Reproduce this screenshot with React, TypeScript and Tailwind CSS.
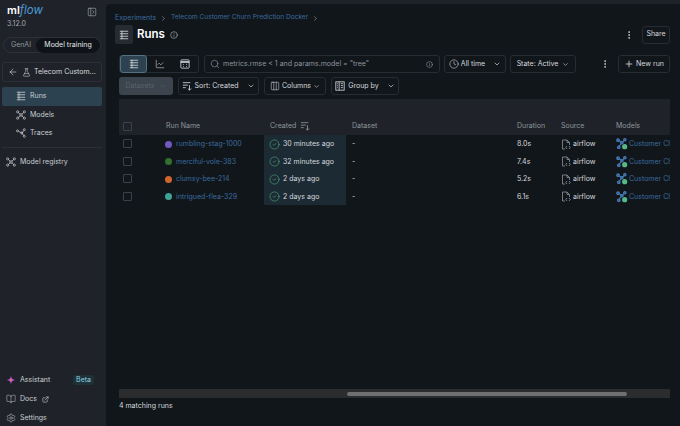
import {
  ArrowLeft,
  ChartLine,
  ChevronDown,
  ChevronRight,
  CircleCheck,
  Clock,
  Columns3,
  ExternalLink,
  FlaskConical,
  Info,
  MoreVertical,
  PanelLeftOpen,
  Plus,
  Search,
  Settings,
  BookOpen,
} from "lucide-react";

const runs = [
  { name: "rumbling-stag-1000", color: "bg-[#6f5bc0]", created: "30 minutes ago", duration: "8.0s" },
  { name: "merciful-vole-383", color: "bg-[#32702f]", created: "32 minutes ago", duration: "7.4s" },
  { name: "clumsy-bee-214", color: "bg-[#d0662e]", created: "2 days ago", duration: "5.2s" },
  { name: "intrigued-flea-329", color: "bg-[#3fa394]", created: "2 days ago", duration: "6.1s" },
];

const RunsIcon = ({ size = 10 }: { size?: number }) => (
  <svg width={size} height={size} viewBox="0 0 12 12" fill="none" stroke="currentColor" strokeWidth="1" className="shrink-0">
    <path d="M1 1.5h10M1 4.5h10M1 7.5h10M1 10.5h10M3.5 1v10" />
  </svg>
);

const ModelsIcon = () => (
  <svg width="10" height="10" viewBox="0 0 12 12" fill="none" stroke="currentColor" strokeWidth="0.9" className="shrink-0">
    <path d="M2.8 3 5 5M9.2 3 7 5M2.8 9 5 7M9.2 9 7 7" />
    <circle cx="2" cy="2.2" r="1.3" />
    <circle cx="10" cy="2.2" r="1.3" />
    <circle cx="2" cy="9.8" r="1.3" />
    <circle cx="10" cy="9.8" r="1.3" />
    <circle cx="6" cy="6" r="1.5" />
  </svg>
);

const TracesIcon = () => (
  <svg width="10" height="10" viewBox="0 0 12 12" fill="none" stroke="currentColor" strokeWidth="0.9" className="shrink-0">
    <path d="M3 4 7 6 9.5 2.8M7 6l2.5 3.2" />
    <circle cx="1.8" cy="3.4" r="1.2" />
    <circle cx="10" cy="2" r="1.2" />
    <circle cx="10" cy="10" r="1.2" />
    <circle cx="7" cy="6" r="1.2" />
  </svg>
);

const SortIcon = ({ size = 10 }: { size?: number }) => (
  <svg width={size} height={size} viewBox="0 0 12 12" fill="none" stroke="currentColor" strokeWidth="1" className="shrink-0">
    <path d="M1 2h9M1 5h6M1 8h3.5M9 5v6M7 9l2 2 2-2" />
  </svg>
);

const GridIcon = () => (
  <svg width="10" height="10" viewBox="0 0 12 12" fill="none" stroke="currentColor" strokeWidth="1" className="shrink-0">
    <rect x="1" y="1" width="10" height="10" rx="1" />
    <path d="M1 3.6h10" strokeWidth="2" />
    <path d="M3.5 6.5h1M7.5 6.5h1M3.5 9h1M7.5 9h1" />
  </svg>
);

const GroupIcon = () => (
  <svg width="10" height="10" viewBox="0 0 12 12" fill="none" stroke="currentColor" strokeWidth="1" className="shrink-0">
    <rect x="1" y="1" width="10" height="10" />
    <path d="M5 1v10M7 3.2h2.5M7 5.5h2.5M7 8h2.5M2.5 3.2h1M2.5 5.5h1M2.5 8h1" />
  </svg>
);

const SourceIcon = () => (
  <svg width="10" height="11" viewBox="0 0 10 11" fill="none" stroke="#8e959b" strokeWidth="0.8" className="shrink-0">
    <path d="M4 10H1.5V1H6l2.5 2.5V6M6 1v2.5h2.5M6 7 4.8 8.5 6 10M8 7l1.2 1.5L8 10" />
  </svg>
);

// Graph glyph with the green registered badge, as used in the Models column
const ModelIcon = () => (
  <svg width="12" height="12" viewBox="0 0 13 13" fill="none" className="shrink-0">
    <g stroke="#4a7db8" strokeWidth="1.2">
      <path d="M2.5 2.5 6.5 5 3 9.5M6.5 5 9.5 2" />
      <circle cx="2.2" cy="2.4" r="1.4" fill="#2f5a8c" />
      <circle cx="9.6" cy="1.9" r="1.3" fill="#2f5a8c" />
      <circle cx="6.4" cy="5.2" r="1.3" fill="#2f5a8c" />
      <circle cx="3" cy="10" r="1.4" fill="#2f5a8c" />
    </g>
    <circle cx="9.4" cy="9.4" r="2.8" fill="#57b987" />
  </svg>
);

const AssistantIcon = () => (
  <svg width="10" height="10" viewBox="0 0 12 12" className="shrink-0">
    <path d="M6 .8C6.5 4 8 5.5 11.2 6 8 6.5 6.5 8 6 11.2 5.5 8 4 6.5.8 6 4 5.5 5.5 4 6 .8Z" fill="#a44fc4" />
    <circle cx="6" cy="6" r="1.6" fill="#e06a8c" />
  </svg>
);

const ToolButton = ({ children, className }: { children: React.ReactNode; className: string }) => (
  <div
    className={`flex h-[18px] items-center justify-center rounded-[3px] border border-[#262c33] text-[7px] text-[#d5d9dd] ${className}`}
  >
    {children}
  </div>
);

const NavRow = ({ icon, label, active }: { icon: React.ReactNode; label: string; active?: boolean }) => (
  <div
    className={`flex h-[18.5px] items-center gap-[4px] rounded-[2px] pl-[14px] text-[7px] text-[#c9ced3] ${
      active ? "bg-[#2c4250]" : ""
    }`}
  >
    {icon}
    {label}
  </div>
);

export default function App() {
  return (
    <div className="flex h-[426px] w-[680px] overflow-hidden bg-[#1f2329] font-['Inter',sans-serif] text-[#d5d9dd]">
      <aside className="flex w-[106px] shrink-0 flex-col pl-[2px] pr-[4px]">
        <div className="flex items-start justify-between pl-[5px] pr-[4px] pt-[2px]">
          <div>
            <div className="flex h-[16px] items-baseline text-[11px] font-semibold leading-[16px] text-white">
              ml<span className="text-[11.5px] font-normal italic text-[#4a9bd8]">flow</span>
            </div>
            <div className="mt-[1px] text-[7px] leading-[10px] text-[#a3a9af]">3.12.0</div>
          </div>
          <PanelLeftOpen size={10} className="mr-[1px] mt-[5px] text-[#a3a9af]" strokeWidth={1.5} />
        </div>

        <div className="ml-[1px] mt-[8px] flex h-[16px] w-[98px] items-center rounded-full border border-[#2c3238] text-[7px]">
          <span className="w-[32px] pl-[2px] text-center text-[#8e959b]">GenAI</span>
          <span className="flex h-[15px] flex-1 items-center justify-center rounded-full bg-[#0f1318] text-[#e4e7ea]">
            Model training
          </span>
        </div>

        <div className="mt-[9px] flex h-[20px] items-center gap-[4px] rounded-[2px] border border-[#2a3036] pl-[5px] text-[7px] text-[#d5d9dd]">
          <ArrowLeft size={10} strokeWidth={1.5} />
          <FlaskConical size={9} strokeWidth={1.4} />
          <span className="ml-[-1px] whitespace-nowrap">Telecom Custom...</span>
        </div>

        <div className="mt-[5px] flex flex-col">
          <NavRow active icon={<RunsIcon />} label="Runs" />
          <NavRow icon={<ModelsIcon />} label="Models" />
          <NavRow icon={<TracesIcon />} label="Traces" />
        </div>

        <div className="mt-[4px] border-t border-[#2a3036] pt-[9px]">
          <div className="flex items-center gap-[4px] pl-[4px] text-[7px] text-[#c9ced3]">
            <ModelsIcon />
            Model registry
          </div>
        </div>

        <div className="mt-auto flex flex-col gap-[9px] pb-[3px] pl-[4px] text-[7px] text-[#c9ced3]">
          <div className="flex h-[10px] items-center gap-[4px]">
            <AssistantIcon />
            <span>Assistant</span>
            <span className="ml-auto mr-[8px] rounded-[2px] bg-[#1d3238] px-[3px] text-[7px] text-[#8fd0e0]">Beta</span>
          </div>
          <div className="flex h-[10px] items-center gap-[4px]">
            <BookOpen size={10} strokeWidth={1.2} />
            Docs
            <ExternalLink size={7} className="ml-[1px]" />
          </div>
          <div className="flex h-[10px] items-center gap-[4px]">
            <Settings size={10} strokeWidth={1.2} />
            Settings
          </div>
        </div>
      </aside>

      <main className="mt-[4px] flex min-w-0 flex-1 flex-col rounded-tl-[4px] bg-[#11161b] pl-[13px] pr-[10px]">
        <div className="-ml-[4px] mt-[9px] flex h-[10px] items-center gap-[4px] text-[6.6px] text-[#3a6a9c]">
          <span className="text-[7px]">Experiments</span>
          <ChevronRight size={7} className="text-[#a3a9af]" />
          Telecom Customer Churn Prediction Docker
          <ChevronRight size={7} className="text-[#a3a9af]" />
        </div>

        <div className="mt-[2px] flex h-[19px] items-center">
          <div className="-ml-[4px] flex h-[19px] w-[18px] items-center justify-center rounded-[2px] bg-[#262b31]">
            <RunsIcon />
          </div>
          <h1 className="ml-[4px] text-[11.5px] font-semibold text-white">Runs</h1>
          <Info size={8} className="ml-[5px] text-[#a3a9af]" />
          <MoreVertical size={10} className="ml-auto mr-[8px] text-[#d5d9dd]" />
          <div className="flex h-[18px] w-[28px] items-center justify-center rounded-[3px] border border-[#262c33] text-[7px]">
            Share
          </div>
        </div>

        <div className="mt-[11px] flex items-center">
          <div className="flex h-[18px] w-[80px] shrink-0 items-center rounded-[3px] border border-[#262c33]">
            <div className="flex h-[18px] w-[27px] items-center justify-center rounded-[3px] border border-[#55707f] bg-[#2c4250]">
              <RunsIcon />
            </div>
            <div className="flex flex-1 justify-center">
              <ChartLine size={10} strokeWidth={1.4} />
            </div>
            <div className="flex flex-1 justify-center">
              <GridIcon />
            </div>
          </div>
          <div className="ml-[5px] flex h-[18px] w-[236px] shrink-0 items-center gap-[3px] rounded-[3px] border border-[#262c33] pl-[5px] pr-[6px] text-[7px] text-[#8e959b]">
            <Search size={10} strokeWidth={1.5} />
            <span className="whitespace-nowrap">metrics.rmse &lt; 1 and params.model = "tree"</span>
            <Info size={7} className="ml-auto" />
          </div>
          <ToolButton className="ml-[4px] w-[62px] shrink-0 gap-[2px]">
            <Clock size={10} strokeWidth={1.4} />
            All time
            <ChevronDown size={8} className="ml-[6px]" />
          </ToolButton>
          <ToolButton className="ml-[4px] w-[66px] shrink-0 gap-[4px]">
            State: Active
            <ChevronDown size={7} />
          </ToolButton>
          <MoreVertical size={10} className="ml-[24px] shrink-0" />
          <ToolButton className="ml-[8px] w-[52px] shrink-0 gap-[2px]">
            <Plus size={10} />
            New run
          </ToolButton>
        </div>

        <div className="mt-[4px] flex h-[18px] items-center gap-[5px]">
          <div className="flex h-[18px] w-[54px] items-center justify-center gap-[5px] rounded-[3px] bg-[#3c454d] text-[7px] text-[#59636b]">
            Datasets
            <ChevronDown size={7} />
          </div>
          <ToolButton className="w-[81px] gap-[2px]">
            <SortIcon />
            Sort: Created
            <ChevronDown size={8} className="ml-[6px]" />
          </ToolButton>
          <ToolButton className="w-[62px] gap-[2px]">
            <Columns3 size={10} strokeWidth={1.3} />
            Columns
            <ChevronDown size={7} />
          </ToolButton>
          <ToolButton className="w-[68px] gap-[3px]">
            <GroupIcon />
            Group by
            <ChevronDown size={8} className="ml-[5px]" />
          </ToolButton>
        </div>

        <section className="mt-[4px] flex min-h-0 flex-1 flex-col">
          <div className="grid h-[36px] grid-cols-[47px_98px_82px_165px_44px_55px_1fr] items-center bg-[#1f2329] pt-[18px] text-[7px] text-[#8e959b]">
            <span className="ml-[4px] h-[9px] w-[9px] rounded-[1px] border border-[#3a4148]" />
            <span>Run Name</span>
            <span className="flex items-center gap-[4px] pl-[6px]">
              Created
              <SortIcon />
            </span>
            <span className="pl-[6px]">Dataset</span>
            <span className="pl-[6px]">Duration</span>
            <span className="pl-[6px]">Source</span>
            <span className="pl-[6px]">Models</span>
          </div>
          {runs.map((run) => (
            <div
              key={run.name}
              className="grid h-[17.5px] grid-cols-[47px_98px_82px_165px_44px_55px_1fr] items-center text-[7px]"
            >
              <span className="ml-[4px] h-[9px] w-[9px] rounded-[1px] border border-[#3a4148]" />
              <span className="flex items-center gap-[4px] whitespace-nowrap pt-[1px] text-[#3a6a9c]">
                <span className={`-ml-[1px] h-[7px] w-[7px] rounded-full ${run.color}`} />
                {run.name}
              </span>
              <span className="flex items-center gap-[3px] self-stretch bg-[#1c2a34] pl-[5px] pt-[1px] text-[#d5d9dd]">
                <CircleCheck size={11} className="text-[#4fae7a]" strokeWidth={1.3} />
                {run.created}
              </span>
              <span className="pl-[6px] pt-[1px]">-</span>
              <span className="pl-[6px] pt-[1px]">{run.duration}</span>
              <span className="flex items-center gap-[2px] pl-[6px] pt-[1px]">
                <SourceIcon />
                airflow
              </span>
              <span className="flex items-center gap-[1px] overflow-hidden whitespace-nowrap pl-[6px] pt-[1px] text-[#3a6a9c]">
                <ModelIcon />
                Customer Churn
              </span>
            </div>
          ))}
          <div className="mt-auto flex h-[9px] items-center bg-[#2a2c2e]">
            <div className="ml-[228px] h-[4px] w-[280px] rounded-full bg-[#6e7072]" />
          </div>
          <div className="mb-[15px] mt-[3px] h-[10px] text-[7px] leading-[10px] text-[#d5d9dd]">4 matching runs</div>
        </section>
      </main>
    </div>
  );
}
